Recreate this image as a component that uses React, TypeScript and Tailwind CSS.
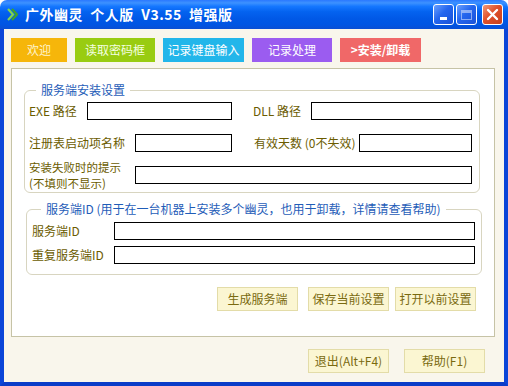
import type { ReactNode } from "react";

const font = { fontFamily: '"Noto Sans CJK SC", "Liberation Sans", sans-serif' };

const tabs = [
	{ text: "欢迎", w: "w-[56px]", cls: "bg-[#f6b60a] text-[#fff4cc]" },
	{ text: "读取密码框", w: "w-[80px]", cls: "bg-[#99cc11] text-[#f4ffe0]" },
	{ text: "记录键盘输入", w: "w-[81px]", cls: "bg-[#22b6ea] text-white" },
	{ text: "记录处理", w: "w-[80px]", cls: "bg-[#9b5cf0] text-white" },
	{ text: ">安装/卸载", w: "w-[81px]", cls: "bg-[#f06868] text-white font-bold" },
];

function Field({ w }: { w: string }) {
	return <div className={`${w} h-[18px] shrink-0 border border-black bg-white`} />;
}

function Label({ children, w, className = "text-[12px] leading-[14px]" }: { children: ReactNode; w: string; className?: string }) {
	return (
		<span className={`${w} shrink-0 text-[#6b5c00] ${className}`}>
			{children}
		</span>
	);
}

function Group({
	title,
	children,
	className,
	legendOffset,
}: {
	title: string;
	children: ReactNode;
	className: string;
	legendOffset: string;
}) {
	return (
		<fieldset className={`rounded-[6px] border border-[#d8d5c0] ${className}`}>
			<legend
				className={`${legendOffset} px-[5px] text-[12px] leading-[14px] text-[#1f5db8]`}
			>
				{title}
			</legend>
			{children}
		</fieldset>
	);
}

function YellowButton({ children, className = "" }: { children: ReactNode; className?: string }) {
	return (
		<button
			className={`flex h-[24px] w-[81px] items-center justify-center border border-[#e3dca8] bg-[#fbf6d2] text-[12px] text-[#7a6a10] ${className}`}
		>
			{children}
		</button>
	);
}

function CaptionButton({ kind }: { kind: "min" | "max" | "close" }) {
	const bg =
		kind === "close"
			? "bg-[linear-gradient(135deg,#f19a7a,#e0502a_45%,#c8401c)]"
			: "bg-[linear-gradient(135deg,#6aa0ff,#2466ee_45%,#1a52d8)]";
	return (
		<div
			className={`flex h-[21px] w-[21px] items-center justify-center rounded-[3px] border border-white ${bg}`}
		>
			{kind === "min" && <div className="mt-[8px] h-[3px] w-[7px] bg-white" />}
			{kind === "max" && (
				<div className="h-[10px] w-[11px] border border-[#b8cdfa] border-t-[3px] opacity-70" />
			)}
			{kind === "close" && (
				<svg width="13" height="13" viewBox="0 0 13 13">
					<path d="M2 2 L11 11 M11 2 L2 11" stroke="white" strokeWidth="2.4" strokeLinecap="round" />
				</svg>
			)}
		</div>
	);
}

export default function App() {
	return (
		<div className="flex h-[386px] w-[508px] flex-col overflow-hidden" style={font}>
			<div className="flex h-[29px] shrink-0 items-center rounded-t-[7px] bg-[linear-gradient(to_bottom,#2a78ff_0%,#3d92ff_10%,#1577ff_22%,#0463f0_40%,#0058e6_65%,#0055e3_85%,#0a4fd4_100%)] pl-[7px] pr-[5px]">
				<svg width="11" height="13" viewBox="0 0 11 13" className="shrink-0">
					<path d="M1 1 L6 6.5 L1 12" stroke="#7fd650" strokeWidth="2.2" fill="none" />
					<path d="M5 1 L10 6.5 L5 12" stroke="#3fa22a" strokeWidth="2.2" fill="none" />
				</svg>
				<span className="ml-[7px] whitespace-pre text-[14px] font-bold tracking-[0.5px] text-white">
					广外幽灵  个人版  V3.55  增强版
				</span>
				<div className="ml-auto flex gap-[2px]">
					<CaptionButton kind="min" />
					<CaptionButton kind="max" />
					<div className="w-[1px]" />
					<CaptionButton kind="close" />
				</div>
			</div>

			<div className="flex flex-1 flex-col border-x-4 border-b-4 border-x-[#0b45d8] border-b-[#0a3cc8] bg-[#f9f6ec] pl-[7px]">
				<div className="mt-[9px] flex gap-[8px]">
					{tabs.map((t) => (
						<div
							key={t.text}
							className={`flex h-[24px] items-center justify-center text-[12px] ${t.w} ${t.cls}`}
						>
							{t.text}
						</div>
					))}
				</div>

				<div className="mt-[6px] flex h-[269px] w-[484px] flex-col border border-[#c6c3a6] bg-white">
					<Group title="服务端安装设置" className="ml-[12px] mt-[14px] w-[456px] pb-[1px] pl-[4px]" legendOffset="ml-[7px]">
						<div className="mt-[5px] flex h-[18px] items-center">
							<div className="flex w-[224px] items-center">
								<Label w="w-[58px]">EXE 路径</Label>
								<Field w="w-[145px]" />
							</div>
							<Label w="w-[58px]">DLL 路径</Label>
							<Field w="w-[161px]" />
						</div>
						<div className="mt-[14px] flex h-[18px] items-center">
							<div className="flex w-[225px] items-center">
								<Label w="w-[106px]">注册表启动项名称</Label>
								<Field w="w-[97px]" />
							</div>
							<Label w="w-[105px]">有效天数 (0不失效)</Label>
							<Field w="w-[113px]" />
						</div>
						<div className="mt-[7px] flex h-[32px] items-center">
							<Label w="w-[106px]" className="text-[11.5px] leading-[16px]">
								安装失败时的提示
								<br />
								(不填则不显示)
							</Label>
							<Field w="w-[337px]" />
						</div>
					</Group>

					<Group
						title="服务端ID (用于在一台机器上安装多个幽灵，也用于卸载，详情请查看帮助)"
						className="ml-[14px] mt-[9px] w-[456px] pb-[10px] pl-[5px]"
						legendOffset="ml-[9px]"
					>
						<div className="mt-[6px] flex h-[18px] items-center">
							<Label w="w-[82px]">服务端ID</Label>
							<Field w="w-[361px]" />
						</div>
						<div className="mt-[6px] flex h-[18px] items-center">
							<Label w="w-[82px]">重复服务端ID</Label>
							<Field w="w-[361px]" />
						</div>
					</Group>

					<div className="mt-[12px] flex justify-end gap-[6px] pr-[18px]">
						<YellowButton className="mr-[4px]">生成服务端</YellowButton>
						<YellowButton>保存当前设置</YellowButton>
						<YellowButton>打开以前设置</YellowButton>
					</div>
				</div>

				<div className="mt-[12px] flex justify-end gap-[15px] pr-[19px]">
					<YellowButton>退出(Alt+F4)</YellowButton>
					<YellowButton>帮助(F1)</YellowButton>
				</div>
			</div>
		</div>
	);
}
